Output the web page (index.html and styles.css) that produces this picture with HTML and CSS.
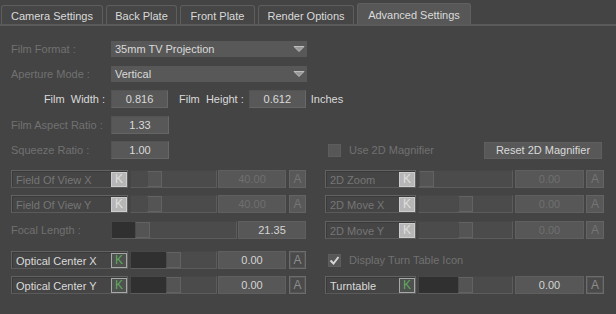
FILE: index.html
```html
<!DOCTYPE html>
<html lang="en">
<head>
  <meta charset="UTF-8" />
  <title>Advanced Settings</title>
  <link rel="stylesheet" href="styles.css">
</head>
<body>
  <div class="tabs">
    <div class="tab tab-camera">Camera Settings</div>
    <div class="tab tab-back">Back Plate</div>
    <div class="tab tab-front">Front Plate</div>
    <div class="tab tab-render">Render Options</div>
    <div class="tab tab-advanced active">Advanced Settings</div>
  </div>

  <div class="panel">
    <div class="row short">
      <span class="label dim">Film Format :</span>
      <div class="combo">
        <span>35mm TV Projection</span>
        <svg class="arrow" width="12" height="8" viewBox="0 0 12 8"><polygon points="1,1.5 11,1.5 6,6.5" fill="#999" stroke="#bdbdbd" stroke-width="1"/></svg>
      </div>
    </div>

    <div class="row short mt9">
      <span class="label dim">Aperture Mode :</span>
      <div class="combo">
        <span>Vertical</span>
        <svg class="arrow" width="12" height="8" viewBox="0 0 12 8"><polygon points="1,1.5 11,1.5 6,6.5" fill="#999" stroke="#bdbdbd" stroke-width="1"/></svg>
      </div>
    </div>

    <div class="row mt8">
      <span class="label label-width">Film&nbsp; Width :</span>
      <div class="field">0.816</div>
      <span class="label label-height">Film&nbsp; Height :</span>
      <div class="field">0.612</div>
      <span class="unit">Inches</span>
    </div>

    <div class="row mt8">
      <span class="label dim">Film Aspect Ratio :</span>
      <div class="field wide">1.33</div>
    </div>

    <div class="row mt7">
      <div class="col-l">
        <span class="label dim">Squeeze Ratio :</span>
        <div class="field wide">1.00</div>
      </div>
      <div class="col-r">
        <div class="check dim"><span class="box"></span>Use 2D Magnifier</div>
        <div class="button">Reset 2D Magnifier</div>
      </div>
    </div>

    <div class="row mt11">
      <div class="col-l">
        <div class="lbox off"><span>Field Of View X</span><span class="key">K</span></div>
        <div class="slider"><span class="track" style="width:16px"></span><span class="knob"></span></div>
        <div class="value">40.00</div>
        <div class="abox">A</div>
      </div>
      <div class="col-r">
        <div class="lbox off"><span>2D Zoom</span><span class="key">K</span></div>
        <div class="slider"><span class="knob"></span></div>
        <div class="value">0.00</div>
        <div class="abox">A</div>
      </div>
    </div>

    <div class="row mt7">
      <div class="col-l">
        <div class="lbox off"><span>Field Of View Y</span><span class="key">K</span></div>
        <div class="slider"><span class="track" style="width:16px"></span><span class="knob"></span></div>
        <div class="value">40.00</div>
        <div class="abox">A</div>
      </div>
      <div class="col-r">
        <div class="lbox off"><span>2D Move X</span><span class="key">K</span></div>
        <div class="slider"><span class="track" style="width:39px"></span><span class="knob"></span></div>
        <div class="value">0.00</div>
        <div class="abox">A</div>
      </div>
    </div>

    <div class="row mt8">
      <div class="col-l">
        <span class="label dim">Focal Length :</span>
        <div class="slider long"><span class="track filled" style="width:23px"></span><span class="knob"></span></div>
        <div class="value on">21.35</div>
      </div>
      <div class="col-r">
        <div class="lbox off"><span>2D Move Y</span><span class="key">K</span></div>
        <div class="slider"><span class="track" style="width:39px"></span><span class="knob"></span></div>
        <div class="value">0.00</div>
        <div class="abox">A</div>
      </div>
    </div>

    <div class="row mt12">
      <div class="col-l">
        <div class="lbox"><span>Optical Center X</span><span class="key">K</span></div>
        <div class="slider"><span class="track filled" style="width:35px"></span><span class="knob"></span></div>
        <div class="value on">0.00</div>
        <div class="abox">A</div>
      </div>
      <div class="col-r">
        <div class="check dim">
          <span class="box"><svg width="11" height="11" viewBox="0 0 11 11"><polyline points="1.5,5.5 4.5,8.5 9.5,2" fill="none" stroke="#d6d6d6" stroke-width="2"/></svg></span>
          Display Turn Table Icon
        </div>
      </div>
    </div>

    <div class="row mt7">
      <div class="col-l">
        <div class="lbox"><span>Optical Center Y</span><span class="key">K</span></div>
        <div class="slider"><span class="track filled" style="width:35px"></span><span class="knob"></span></div>
        <div class="value on">0.00</div>
        <div class="abox">A</div>
      </div>
      <div class="col-r">
        <div class="lbox"><span>Turntable</span><span class="key">K</span></div>
        <div class="slider"><span class="track filled" style="width:39px"></span><span class="knob"></span></div>
        <div class="value on">0.00</div>
        <div class="abox">A</div>
      </div>
    </div>
  </div>
</body>
</html>
```

FILE: styles.css
```css
* {
  box-sizing: border-box;
}

body {
  margin: 0;
  width: 616px;
  height: 314px;
  overflow: hidden;
  background-color: #444;
  color: #dadada;
  font-family: "Liberation Sans", Arial, sans-serif;
  font-size: 11px;
}

/* tabs */
.tabs {
  display: flex;
  align-items: flex-end;
  gap: 3px;
  height: 26px;
  padding-left: 1px;
  border-bottom: 2px solid #5a5a5a;
}

.tab {
  height: 19px;
  padding-top: 3px;
  line-height: 14px;
  text-align: center;
  background: #464646;
  border: 1px solid #5e5e5e;
  border-bottom: none;
  border-radius: 3px 3px 0 0;
  white-space: nowrap;
}

.tab-camera { width: 102px; }
.tab-back { width: 71px; }
.tab-front { width: 75px; }
.tab-render { width: 96px; }
.tab-advanced { width: 114px; }

.tab.active {
  height: 21px;
  padding-top: 4px;
  background: #575757;
  border-color: #606060;
}

/* panel */
.panel {
  padding: 15px 0 0 11px;
}

.row {
  display: flex;
  align-items: center;
  height: 18px;
  line-height: 18px;
}

.row.short {
  height: 16px;
  line-height: 16px;
}

.mt7 { margin-top: 7px; }
.mt8 { margin-top: 8px; }
.mt9 { margin-top: 9px; }
.mt11 { margin-top: 11px; }
.mt12 { margin-top: 12px; }

.col-l {
  display: flex;
  align-items: center;
  width: 296px;
  height: 18px;
}

.col-r {
  display: flex;
  align-items: center;
  width: 280px;
  height: 18px;
  margin-left: 18px;
}

.label {
  width: 100px;
  white-space: nowrap;
}

.dim {
  color: #717171;
}

.label-width {
  width: 94px;
  margin-right: 6px;
  text-align: right;
}

.label-height {
  width: auto;
  margin: 0 5px 0 11px;
}

.unit {
  margin-left: 5px;
}

.combo {
  display: flex;
  align-items: center;
  justify-content: space-between;
  width: 196px;
  height: 16px;
  padding: 0 2px 0 4px;
  background: #585858;
}

.combo .arrow {
  display: block;
}

.field {
  width: 57px;
  height: 18px;
  line-height: 16px;
  text-align: center;
  background: #585858;
  border: 1px solid;
  border-color: #535353 #686868 #656565 #535353;
}

.field.wide {
  width: 58px;
}

/* checkbox + button */
.check {
  display: flex;
  align-items: center;
  margin-left: 3px;
}

.check .box {
  display: flex;
  align-items: center;
  justify-content: center;
  width: 13px;
  height: 13px;
  margin-right: 8px;
  background: #575757;
  border: 1px solid #5d5d5d;
}

.button {
  width: 118px;
  height: 17px;
  margin: 0 3px 0 auto;
  line-height: 15px;
  text-align: center;
  background: #585858;
  border: 1px solid #5f5f5f;
}

/* attribute widgets */
.lbox {
  display: flex;
  align-items: center;
  justify-content: space-between;
  width: 117px;
  height: 18px;
  padding-left: 4px;
  padding-top: 1px;
  line-height: 16px;
  background: #454545;
  border: 1px solid;
  border-color: #626262 #626262 #5a5a5a #626262;
  box-shadow: inset 1px 1px 0 #3a3a3a;
}

.col-r .lbox {
  width: 91px;
}

.lbox.off {
  color: #767676;
}

.key {
  width: 16px;
  height: 15px;
  margin-top: -1px;
  font-size: 12px;
  line-height: 13px;
  text-align: center;
  color: #62a862;
  background: #4e524e;
  border: 1px solid #a8a8a8;
}

.lbox.off .key {
  color: #dedede;
  background: #b6b6b6;
  border-color: #cdcdcd;
}

.slider {
  display: flex;
  width: 87px;
  height: 18px;
  margin-left: 2px;
  background: #4b4b4b;
  border: 1px solid;
  border-color: #464646 #5c5c5c #5c5c5c #464646;
}

.col-r .slider {
  width: 95px;
}

.slider.long {
  width: 126px;
  margin-left: 0;
}

.track.filled {
  background: #303030;
}

.knob {
  width: 15px;
  background: #545454;
  border: 1px solid #626262;
  border-left-color: #4a4a4a;
}

.value {
  width: 68px;
  height: 18px;
  margin-left: 1px;
  line-height: 16px;
  text-align: center;
  color: #6f6f6f;
  background: #575757;
  border: 1px solid #5f5f5f;
}

.col-r .value {
  width: 69px;
  margin-left: 2px;
}

.value.on {
  color: #d4d4d4;
}

.abox {
  width: 17px;
  height: 18px;
  margin-left: 3px;
  font-size: 12px;
  line-height: 16px;
  text-align: center;
  color: #747474;
  background: #585858;
  border: 1px solid #646464;
}

.col-r .abox {
  width: 18px;
  margin-left: 2px;
}

.lbox:not(.off) ~ .abox {
  color: #8c8c8c;
  background: #4a4a4a;
  border-color: #6c6c6c;
  box-shadow: inset 0 0 0 1px #555;
}
```
